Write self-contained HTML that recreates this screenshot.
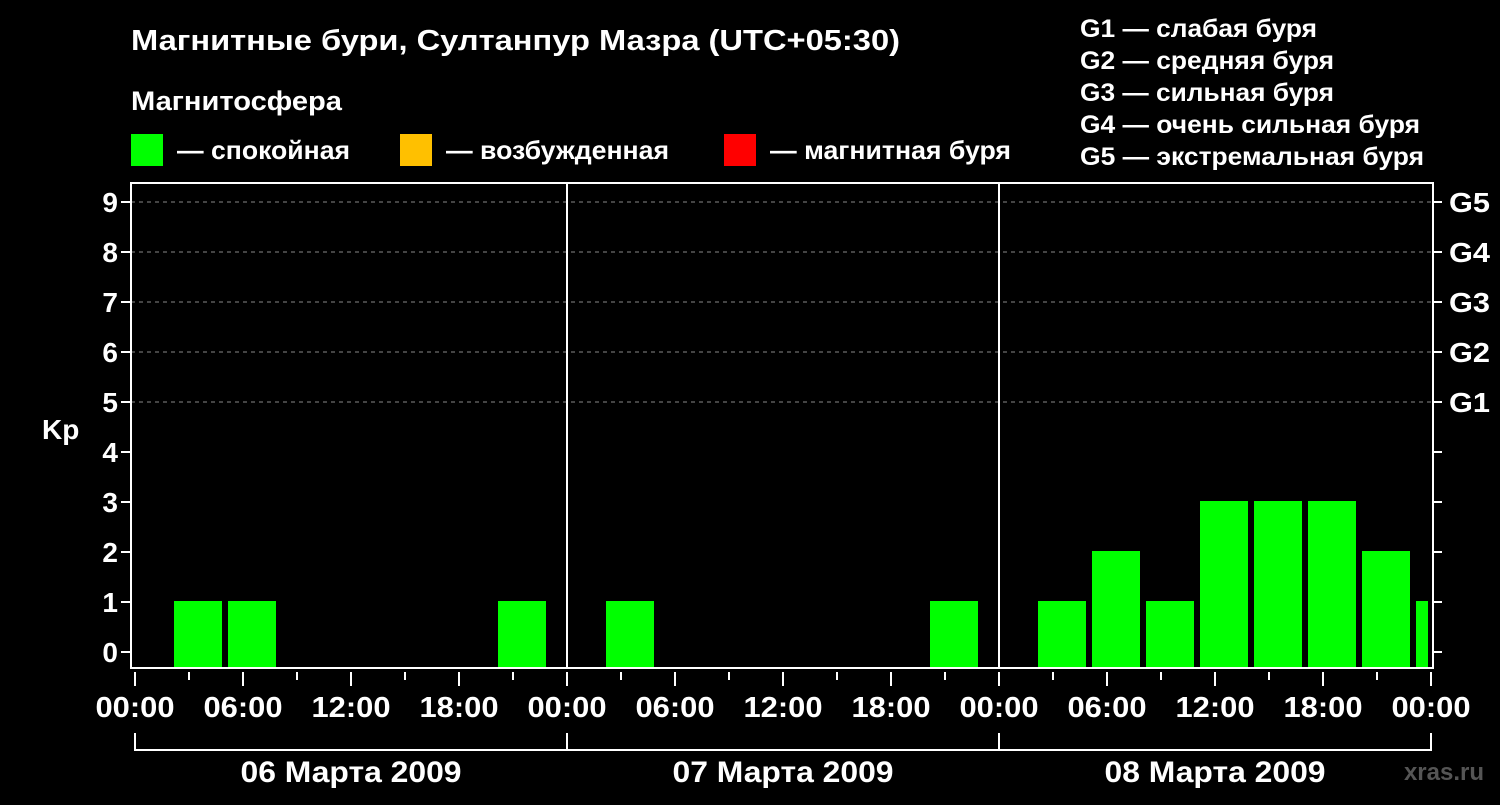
<!DOCTYPE html>
<html><head><meta charset="utf-8"><style>
body{margin:0;background:#000;width:1500px;height:800px;overflow:hidden;font-family:"Liberation Sans",sans-serif;}
</style></head><body>
<svg width="1500" height="800" xmlns="http://www.w3.org/2000/svg" font-family="Liberation Sans, sans-serif" font-weight="bold" fill="#fff">
<rect width="1500" height="800" fill="#000"/>
<text x="131" y="50" font-size="29" textLength="769" lengthAdjust="spacingAndGlyphs">Магнитные бури, Султанпур Мазра (UTC+05:30)</text>
<text x="131" y="110" font-size="27" textLength="211" lengthAdjust="spacingAndGlyphs">Магнитосфера</text>
<rect x="131" y="134" width="32" height="32" fill="#00ff00"/>
<text x="177" y="159" font-size="26" textLength="173" lengthAdjust="spacingAndGlyphs">— спокойная</text>
<rect x="400" y="134" width="32" height="32" fill="#ffc000"/>
<text x="446" y="159" font-size="26" textLength="223" lengthAdjust="spacingAndGlyphs">— возбужденная</text>
<rect x="724" y="134" width="32" height="32" fill="#ff0000"/>
<text x="770" y="159" font-size="26" textLength="241" lengthAdjust="spacingAndGlyphs">— магнитная буря</text>
<g font-size="25">
<text x="1080" y="37" textLength="237" lengthAdjust="spacingAndGlyphs">G1 — слабая буря</text>
<text x="1080" y="69" textLength="254" lengthAdjust="spacingAndGlyphs">G2 — средняя буря</text>
<text x="1080" y="101" textLength="254" lengthAdjust="spacingAndGlyphs">G3 — сильная буря</text>
<text x="1080" y="133" textLength="340" lengthAdjust="spacingAndGlyphs">G4 — очень сильная буря</text>
<text x="1080" y="165" textLength="344" lengthAdjust="spacingAndGlyphs">G5 — экстремальная буря</text>
</g>
<g stroke="#888" stroke-dasharray="4,4" stroke-width="1">
<line x1="131" y1="202" x2="1433" y2="202"/><line x1="131" y1="252" x2="1433" y2="252"/>
<line x1="131" y1="302" x2="1433" y2="302"/><line x1="131" y1="352" x2="1433" y2="352"/>
<line x1="131" y1="402" x2="1433" y2="402"/>
</g>
<g fill="#00ff00">
<rect x="174" y="601" width="48" height="67"/><rect x="228" y="601" width="48" height="67"/>
<rect x="498" y="601" width="48" height="67"/><rect x="606" y="601" width="48" height="67"/>
<rect x="930" y="601" width="48" height="67"/><rect x="1038" y="601" width="48" height="67"/>
<rect x="1092" y="551" width="48" height="117"/><rect x="1146" y="601" width="48" height="67"/>
<rect x="1200" y="501" width="48" height="167"/><rect x="1254" y="501" width="48" height="167"/>
<rect x="1308" y="501" width="48" height="167"/><rect x="1362" y="551" width="48" height="117"/>
<rect x="1416" y="601" width="12" height="67"/>
</g>
<g stroke="#fff" stroke-width="2" fill="none">
<rect x="131" y="183" width="1302" height="485"/>
<line x1="567" y1="183" x2="567" y2="668"/><line x1="999" y1="183" x2="999" y2="668"/>
<path d="M121 202h10M121 252h10M121 302h10M121 352h10M121 402h10M121 452h10M121 502h10M121 552h10M121 602h10M121 652h10"/>
<path d="M1433 202h9M1433 252h9M1433 302h9M1433 352h9M1433 402h9M1433 452h9M1433 502h9M1433 552h9M1433 602h9M1433 652h9"/>
<path d="M135 672v14M189 672v8M243 672v14M297 672v8M351 672v14M405 672v8M459 672v14M513 672v8M567 672v14M621 672v8M675 672v14M729 672v8M783 672v14M837 672v8M891 672v14M945 672v8M999 672v14M1053 672v8M1107 672v14M1161 672v8M1215 672v14M1269 672v8M1323 672v14M1377 672v8M1431 672v14"/>
<path d="M135 733v17H1431V733M567 733v17M999 733v17"/>
</g>
<g font-size="28" text-anchor="end">
<text x="118" y="212">9</text><text x="118" y="262">8</text><text x="118" y="312">7</text><text x="118" y="362">6</text><text x="118" y="412">5</text><text x="118" y="462">4</text><text x="118" y="512">3</text><text x="118" y="562">2</text><text x="118" y="612">1</text><text x="118" y="662">0</text>
</g>
<text x="42" y="439" font-size="28">Kp</text>
<g font-size="28">
<text x="1449" y="212" textLength="41" lengthAdjust="spacingAndGlyphs">G5</text><text x="1449" y="262" textLength="41" lengthAdjust="spacingAndGlyphs">G4</text><text x="1449" y="312" textLength="41" lengthAdjust="spacingAndGlyphs">G3</text><text x="1449" y="362" textLength="41" lengthAdjust="spacingAndGlyphs">G2</text><text x="1449" y="412" textLength="41" lengthAdjust="spacingAndGlyphs">G1</text>
</g>
<g font-size="29" text-anchor="middle">
<text x="135" y="717" textLength="79" lengthAdjust="spacingAndGlyphs">00:00</text><text x="243" y="717" textLength="79" lengthAdjust="spacingAndGlyphs">06:00</text><text x="351" y="717" textLength="79" lengthAdjust="spacingAndGlyphs">12:00</text><text x="459" y="717" textLength="79" lengthAdjust="spacingAndGlyphs">18:00</text>
<text x="567" y="717" textLength="79" lengthAdjust="spacingAndGlyphs">00:00</text><text x="675" y="717" textLength="79" lengthAdjust="spacingAndGlyphs">06:00</text><text x="783" y="717" textLength="79" lengthAdjust="spacingAndGlyphs">12:00</text><text x="891" y="717" textLength="79" lengthAdjust="spacingAndGlyphs">18:00</text>
<text x="999" y="717" textLength="79" lengthAdjust="spacingAndGlyphs">00:00</text><text x="1107" y="717" textLength="79" lengthAdjust="spacingAndGlyphs">06:00</text><text x="1215" y="717" textLength="79" lengthAdjust="spacingAndGlyphs">12:00</text><text x="1323" y="717" textLength="79" lengthAdjust="spacingAndGlyphs">18:00</text><text x="1431" y="717" textLength="79" lengthAdjust="spacingAndGlyphs">00:00</text>
<text x="351" y="782" font-size="30" textLength="221" lengthAdjust="spacingAndGlyphs">06 Марта 2009</text>
<text x="783" y="782" font-size="30" textLength="221" lengthAdjust="spacingAndGlyphs">07 Марта 2009</text>
<text x="1215" y="782" font-size="30" textLength="221" lengthAdjust="spacingAndGlyphs">08 Марта 2009</text>
</g>
<text x="1484" y="780" font-size="24" text-anchor="end" fill="#555">xras.ru</text>
</svg>
</body></html>
